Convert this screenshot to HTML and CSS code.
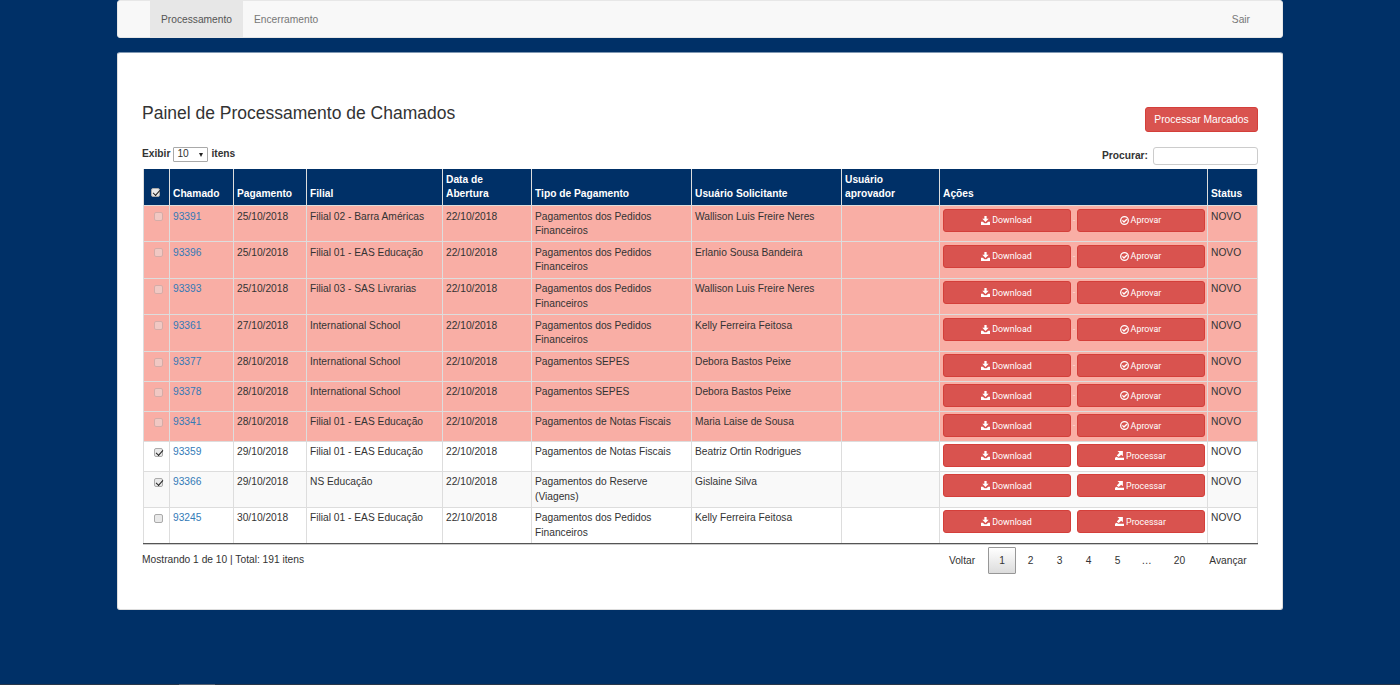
FILE: index.html
```
<!DOCTYPE html>
<html lang="pt-BR">
<head>
<meta charset="utf-8">
<title>Painel de Processamento de Chamados</title>
<link rel="stylesheet" href="styles.css">
</head>
<body>
<svg class="defs" width="0" height="0">
<symbol id="i-down" viewBox="0 0 16 16"><path d="M6 0h4v5h3.700L8 10.800 2.300 5H6z"/><path d="M0 10h3.200l3 2.800h3.600l3-2.800H16v6H0z"/></symbol>
<symbol id="i-ok" viewBox="0 0 16 16"><circle cx="8" cy="8" r="6.800" fill="none" stroke="currentColor" stroke-width="2.2"/><path d="M4.300 7.800l2.800 2.800 5.400-5.400" fill="none" stroke="currentColor" stroke-width="2.4"/></symbol>
<symbol id="i-proc" viewBox="0 0 16 16"><path d="M4.500 0H14v9.500l-3-3-4.500 4.300-3.300-3L7.700 3.300z"/><path d="M0 12l3-2 2.500 2H16v4H0z"/></symbol>
</svg>
<nav class="navbar">
<a class="nav-item active">Processamento</a><a class="nav-item">Encerramento</a><a class="nav-item exit">Sair</a>
</nav>
<main class="panel">
<header class="panel-head"><h1>Painel de Processamento de Chamados</h1><button class="btn-main">Processar Marcados</button></header>
<div class="tools">
<div class="length">Exibir <span class="select">10<i></i></span> itens</div>
<label class="search">Procurar: <input type="text"></label>
</div>
<table class="grid">
<colgroup><col class="c1"><col class="c2"><col class="c3"><col class="c4"><col class="c5"><col class="c6"><col class="c7"><col class="c8"><col class="c9"><col class="c10"></colgroup>
<thead><tr><th><span class="check on"></span></th><th>Chamado</th><th>Pagamento</th><th>Filial</th><th>Data de<br>Abertura</th><th>Tipo de Pagamento</th><th>Usuário Solicitante</th><th>Usuário<br>aprovador</th><th>Ações</th><th>Status</th></tr></thead>
<tbody id="rows"></tbody>
</table>
<footer class="foot"><div class="info">Mostrando 1 de 10 | Total: 191 itens</div>
<div class="pages"><a class="prev">Voltar</a><a class="current">1</a><a>2</a><a>3</a><a>4</a><a>5</a><a>…</a><a class="last">20</a><a class="next">Avançar</a></div></footer>
</main>
<div class="bottom-strip"><span></span></div>
<script src="rows.js"></script>
</body>
</html>
```
FILE: rows.js
```
const PEDIDOS = "Pagamentos dos Pedidos<br>Financeiros";
const NOTAS = "Pagamentos de Notas Fiscais";
const EAS = "Filial 01 - EAS Educação";
// [número, pagamento, filial, tipo, solicitante, classe da linha, marcado]
const data = [
  ["93391", "25/10/2018", "Filial 02 - Barra Américas", PEDIDOS, "Wallison Luis Freire Neres", "late tall"],
  ["93396", "25/10/2018", EAS, PEDIDOS, "Erlanio Sousa Bandeira", "late tall"],
  ["93393", "25/10/2018", "Filial 03 - SAS Livrarias", PEDIDOS, "Wallison Luis Freire Neres", "late tall"],
  ["93361", "27/10/2018", "International School", PEDIDOS, "Kelly Ferreira Feitosa", "late tall"],
  ["93377", "28/10/2018", "International School", "Pagamentos SEPES", "Debora Bastos Peixe", "late"],
  ["93378", "28/10/2018", "International School", "Pagamentos SEPES", "Debora Bastos Peixe", "late"],
  ["93341", "28/10/2018", EAS, NOTAS, "Maria Laise de Sousa", "late"],
  ["93359", "29/10/2018", EAS, NOTAS, "Beatriz Ortin Rodrigues", "", true],
  ["93366", "29/10/2018", "NS Educação", "Pagamentos do Reserve<br>(Viagens)", "Gislaine Silva", "alt tall", true],
  ["93245", "30/10/2018", EAS, PEDIDOS, "Kelly Ferreira Feitosa", "tall"],
];
const button = (icon, label) =>
  `<button class="btn"><svg class="${icon}"><use href="#${icon}"/></svg><span>${label}</span></button>`;
document.getElementById("rows").innerHTML = data.map(([id, pay, branch, type, user, cls, on]) => {
  const late = cls.includes("late");
  const second = late ? button("i-ok", "Aprovar") : button("i-proc", "Processar");
  return `<tr class="${cls}"><td class="mark"><span class="check${on ? " on" : ""}${late ? " off" : ""}"></span></td>
    <td><a class="link">${id}</a></td><td>${pay}</td><td>${branch}</td><td>22/10/2018</td><td>${type}</td><td>${user}</td><td></td>
    <td class="acts"><div class="actions">${button("i-down", "Download")}<b>${late ? "-" : ""}</b>${second}</div></td><td>NOVO</td></tr>`;
}).join("");
```
FILE: styles.css
```
* { box-sizing: border-box; }
body { margin: 0; height: 685px; overflow: hidden; background: #003067; color: #333; font: 10.22px/14.6px "Liberation Sans", Arial, sans-serif; display: flex; flex-direction: column; align-items: center; }
.defs { display: none; }
.navbar { width: 1166px; height: 38px; flex: none; background: #f8f8f8; border: 1px solid #e7e7e7; border-radius: 3px; display: flex; padding: 0 21px 0 32px; }
.nav-item { padding: 11.5px 11px 0; color: #777; }
.nav-item.active { background: #e7e7e7; color: #555; width: 93px; }
.exit { margin-left: auto; }
.panel { width: 1166px; height: 558px; margin-top: 14px; flex: none; background: #fff; border: 1px solid #ddd; border-top-color: #8098b3; border-radius: 3px; padding: 54px 24px 0; }
.panel-head { display: flex; justify-content: space-between; height: 39px; }
h1 { margin: -4px 0 0; font-size: 17.5px; line-height: 20px; font-weight: 400; }
.btn-main { width: 113px; height: 25px; background: #d9534f; border: 1px solid #d43f3a; border-radius: 3px; color: #fff; font: 10.3px "Liberation Sans", Arial, sans-serif; padding: 0; white-space: nowrap; }
.tools { display: flex; justify-content: space-between; height: 23px; font-weight: 700; }
.length { display: flex; gap: 3px; align-items: flex-start; padding-top: 1px; }
.select { width: 35px; height: 15px; border: 1px solid #a9a9a9; border-radius: 1px; font-weight: 400; display: flex; align-items: center; justify-content: space-between; padding: 0 4px 0 3px; }
.select i { border: 2.5px solid transparent; border-top: 4px solid #222; border-bottom: 0; }
.search { display: flex; gap: 5px; align-items: center; height: 19px; padding-top: 1px; }
.search input { width: 105px; height: 18px; border: 1px solid #ccc; border-radius: 3px; }
.grid { table-layout: fixed; width: 1115px; margin-left: 1px; border-collapse: separate; border-spacing: 0; border-bottom: 1px solid #555; box-shadow: 0 1px #ccc; }
.c1 { width: 27px; } .c2 { width: 64px; } .c3 { width: 73px; } .c4 { width: 136px; } .c5 { width: 89px; } .c6 { width: 160px; } .c7 { width: 150px; } .c8 { width: 98px; } .c9 { width: 268px; }
th { background: #003067; color: #fff; height: 36px; text-align: left; vertical-align: bottom; padding: 0 3px 3px; border-right: 1px solid #ddd; }
th:first-child { padding: 0 0 8px 7px; }
td { height: 30px; vertical-align: top; padding: 3.5px 0 0 3px; border-right: 1px solid #ddd; border-top: 1px solid #ddd; }
th:first-child, td:first-child { border-left: 1px solid #ddd; }
td.mark { padding: 6px 0 0 10px; }
td.acts { padding: 2.5px 0 0 3px; }
.tall td { height: 36.4px; }
.late td { background: #f9aea5; }
.alt td { background: #f9f9f9; }
.link { color: #337ab7; }
.check { display: block; width: 9px; height: 9px; border: 1px solid #aaa; border-radius: 2px; background: #e9e9e9; }
.check.off { opacity: .45; }
.check.on::after { content: ""; display: block; width: 6px; height: 3px; margin: 1px 0 0 1px; border-left: 1.5px solid #222; border-bottom: 1.5px solid #222; transform: rotate(-48deg); }
.actions { display: flex; }
.actions b { width: 6px; text-align: center; color: #fde0dd; font: 8px/22px "Liberation Sans", sans-serif; }
.btn { width: 128px; height: 23px; background: #d9534f; border: 1px solid #d43f3a; border-radius: 3px; color: #fff; padding: 0 1px 0 0; display: flex; align-items: center; justify-content: center; gap: 2px; font: 8.9px Roboto, sans-serif; }
.btn svg { width: 9px; height: 9px; fill: currentColor; }
.foot { display: flex; justify-content: space-between; padding-top: 3px; }
.info { padding-top: 6px; }
.pages { display: flex; line-height: 27px; }
.pages a { width: 29px; text-align: center; }
.pages a.prev { width: 52px; }
.pages a.last { width: 37px; }
.pages a.next { width: 60px; }
.pages a.current { width: 28px; height: 27px; border: 1px solid #979797; border-radius: 1px; background: linear-gradient(#fff, #dcdcdc); line-height: 25px; }
.bottom-strip { width: 100%; height: 1px; margin-top: auto; padding-left: 179px; background: #27364a; }
.bottom-strip span { display: block; width: 36px; height: 1px; background: #56606f; }
```
